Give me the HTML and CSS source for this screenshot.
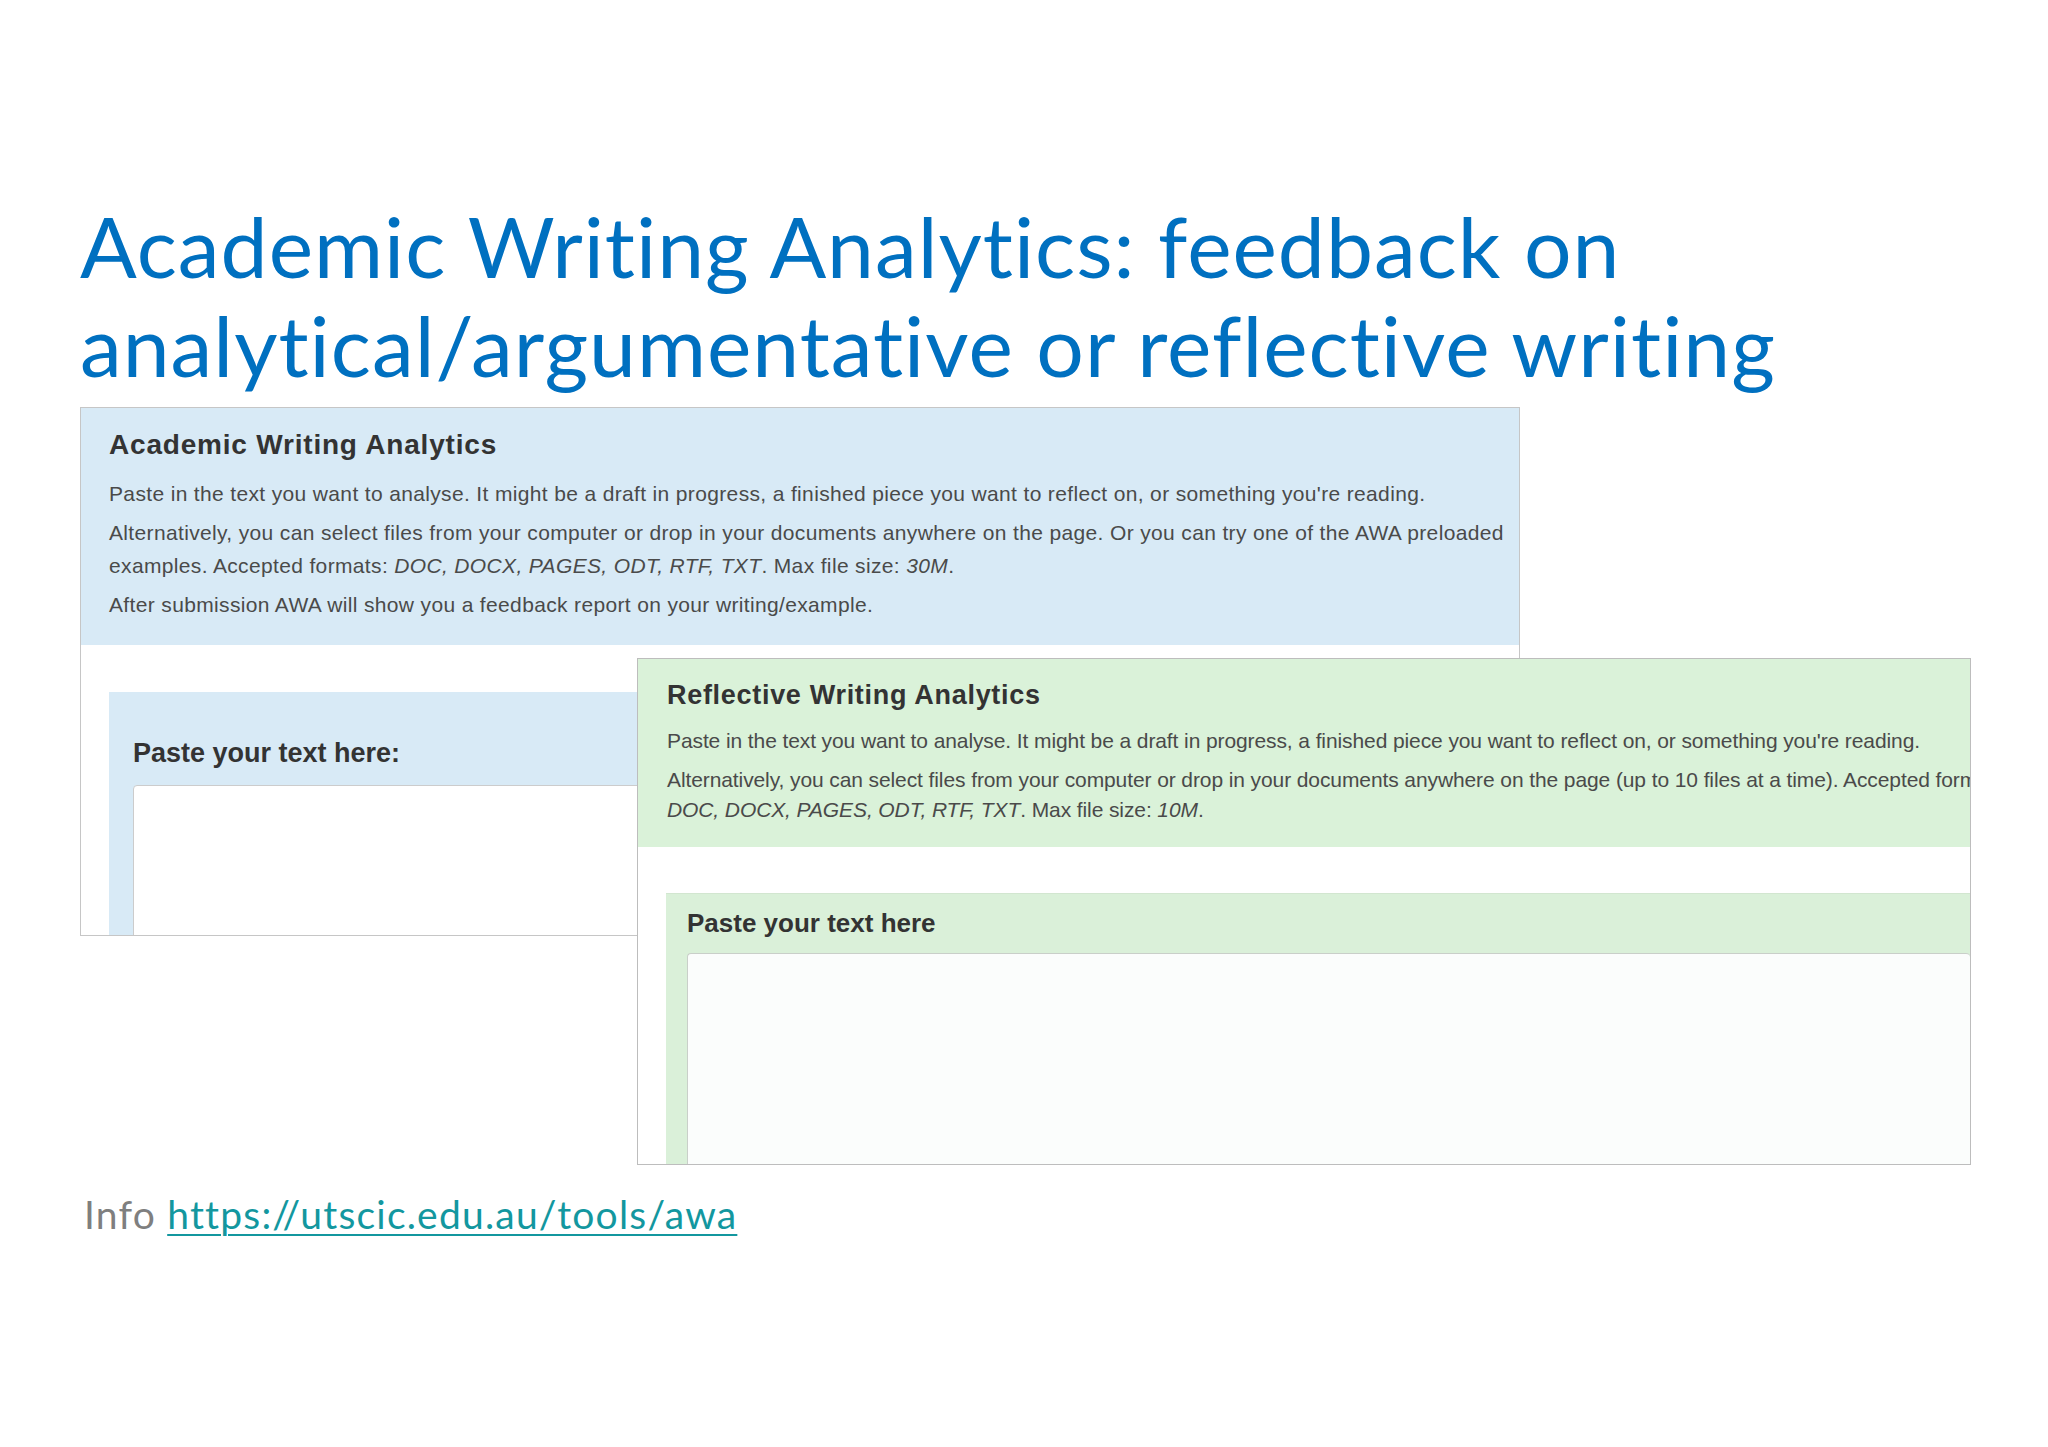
FILE: index.html
```html
<!DOCTYPE html>
<html lang="en">
<head>
<meta charset="utf-8">
<title>Academic Writing Analytics</title>
<link rel="stylesheet" href="styles.css">
</head>
<body>
<div class="slide">
  <h1 class="title">Academic Writing Analytics: feedback on<br>analytical/argumentative or reflective writing</h1>

  <div class="figure">
    <section class="shot awa">
      <div class="shot-head">
        <h2 class="shot-title">Academic Writing Analytics</h2>
        <p class="shot-text">Paste in the text you want to analyse. It might be a draft in progress, a finished piece you want to reflect on, or something you're reading.</p>
        <p class="shot-text">Alternatively, you can select files from your computer or drop in your documents anywhere on the page. Or you can try one of the AWA preloaded<br>examples. Accepted formats: <i>DOC, DOCX, PAGES, ODT, RTF, TXT</i>. Max file size: <i>30M</i>.</p>
        <p class="shot-text">After submission AWA will show you a feedback report on your writing/example.</p>
      </div>
      <div class="paste-box">
        <div class="paste-label">Paste your text here:</div>
        <div class="paste-area"></div>
      </div>
    </section>

    <section class="shot rwa">
      <div class="shot-head">
        <h2 class="shot-title">Reflective Writing Analytics</h2>
        <p class="shot-text">Paste in the text you want to analyse. It might be a draft in progress, a finished piece you want to reflect on, or something you're reading.</p>
        <p class="shot-text">Alternatively, you can select files from your computer or drop in your documents anywhere on the page (up to 10 files at a time). Accepted formats:<br><i>DOC, DOCX, PAGES, ODT, RTF, TXT</i>. Max file size: <i>10M</i>.</p>
      </div>
      <div class="paste-box">
        <div class="paste-label">Paste your text here</div>
        <div class="paste-area"></div>
      </div>
    </section>
  </div>

  <p class="info">Info <a class="info-link" href="#">https://utscic.edu.au/tools/awa</a></p>
</div>
</body>
</html>
```

FILE: styles.css
```css
html, body {
  margin: 0;
  padding: 0;
  background: #ffffff;
}

.slide {
  position: relative;
  width: 2048px;
  height: 1447px;
  overflow: hidden;
  background: #ffffff;
}

.title {
  margin: 196px 0 0 0;
  padding-left: 80px;
  font-family: "Lato", "DejaVu Sans", sans-serif;
  font-weight: 400;
  font-size: 84px;
  line-height: 99px;
  letter-spacing: 1px;
  color: #0070c0;
}

.figure {
  position: relative;
  margin-top: 13px;
  height: 758px;
}

.shot {
  box-sizing: border-box;
  border: 1px solid #c6c6c6;
  background: #ffffff;
  overflow: hidden;
  font-family: "Liberation Sans", Arial, sans-serif;
  color: #333333;
}

.shot p { margin: 0; }

.shot-title {
  margin: 0;
  font-weight: 700;
}

.shot-text {
  white-space: nowrap;
  color: #4a4a4a;
}

.paste-label {
  font-weight: 700;
  color: #333333;
}

.paste-area {
  background: #ffffff;
  border: 1px solid #cccccc;
  border-radius: 4px;
  height: 400px;
}

/* AWA screenshot */
.awa {
  margin-left: 80px;
  width: 1440px;
  height: 529px;
}

.awa .shot-head {
  background: #d8eaf6;
  padding: 21px 28px 24px 28px;
  height: 237px;
  box-sizing: border-box;
}

.awa .shot-title {
  font-size: 28px;
  line-height: 32px;
  letter-spacing: 0.8px;
  margin-bottom: 16px;
}

.awa .shot-text {
  font-size: 21px;
  line-height: 33px;
  letter-spacing: 0.35px;
  margin-bottom: 6px;
}

.awa .paste-box {
  margin: 47px 28px 0 28px;
  background: #d8eaf6;
  padding: 46px 24px 0 24px;
  height: 400px;
}

.awa .paste-label {
  font-size: 27px;
  line-height: 31px;
  margin-bottom: 16px;
}

/* RWA screenshot (overlaps the AWA one) */
.rwa {
  position: absolute;
  left: 637px;
  top: 251px;
  width: 1334px;
  height: 507px;
  border-color: #bdbdbd;
}

.rwa .shot-head {
  background: #daf2d9;
  padding: 21px 0 22px 29px;
  height: 188px;
  box-sizing: border-box;
}

.rwa .shot-title {
  font-size: 27px;
  line-height: 31px;
  letter-spacing: 0.7px;
  margin-bottom: 15px;
}

.rwa .shot-text {
  font-size: 21px;
  line-height: 30px;
  letter-spacing: -0.1px;
  margin-bottom: 9px;
}

.rwa .paste-box {
  margin: 46px 0 0 28px;
  background: #daf0d9;
  border-top: 1px solid #d2e6d0;
  padding: 14px 0 0 21px;
  height: 400px;
}

.rwa .paste-label {
  font-size: 26px;
  line-height: 30px;
  margin-bottom: 15px;
}

.rwa .paste-area {
  background: #fbfdfc;
  border-color: #c9cfc9;
  border-right: none;
}

.info {
  margin: 26px 0 0 84px;
  font-family: "Lato", "Open Sans", sans-serif;
  font-size: 39px;
  line-height: 47px;
  letter-spacing: 1.2px;
  color: #7f7f7f;
}

.info-link {
  color: #13979f;
  text-decoration: underline;
  text-decoration-thickness: 2px;
  text-underline-offset: 5px;
}
```
